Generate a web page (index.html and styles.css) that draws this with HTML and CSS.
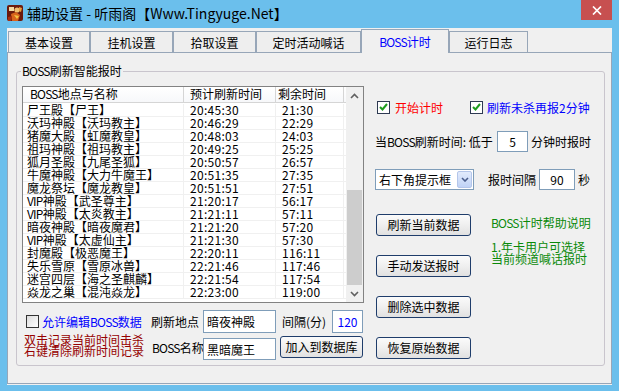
FILE: index.html
```html
<!DOCTYPE html>
<html lang="zh-CN">
<head>
  <meta charset="UTF-8">
  <title>辅助设置 - 听雨阁【Www.Tingyuge.Net】</title>
  <link rel="stylesheet" href="styles.css">
</head>
<body>
  <div class="window">
    <div class="titlebar">
      <svg class="app-icon" viewBox="0 0 16 16">
        <rect width="16" height="16" rx="2" fill="#6b1a0c"/>
        <path d="M2 2h5v4H2z" fill="#f2d9a0"/>
        <circle cx="10" cy="5" r="2.6" fill="#f0c070"/>
        <path d="M4 9L9 7l4 3-2 6H5z" fill="#d8641c"/>
        <path d="M7 10l5 1-2 3z" fill="#f5c542"/>
        <path d="M1 12l4-1-1 5H1z" fill="#a8300f"/>
        <path d="M12 2l3 1-1 4-2-1z" fill="#e8a040"/>
      </svg>
      <span class="title">辅助设置 - 听雨阁【Www.Tingyuge.Net】</span>
      <span class="close">
        <svg width="10" height="9" viewBox="0 0 10 9"><path d="M1 0.5L9 8.5M9 0.5L1 8.5" stroke="#fff" stroke-width="1.7"/></svg>
      </span>
    </div>

    <div class="client">
      <div class="tabs">
        <div class="tab t1">基本设置</div>
        <div class="tab t2">挂机设置</div>
        <div class="tab t3">拾取设置</div>
        <div class="tab t4">定时活动喊话</div>
        <div class="tab t5 active"><span class="en">BOSS</span>计时</div>
        <div class="tab t6">运行日志</div>
      </div>

      <div class="panel">
        <fieldset class="group">
          <legend><span class="en">BOSS</span>刷新智能报时</legend>
          <div class="group-body">

            <div class="left">
              <div class="list">
                <div class="grid">
                  <div class="head">
                    <span class="c1"><span class="en">BOSS</span>地点与名称</span>
                    <span class="c2">预计刷新时间</span>
                    <span class="c3">剩余时间</span>
                  </div>
                  <div class="rows">
                    <div class="row"><span class="c1">尸王殿【尸王】</span><span class="c2">20:45:30</span><span class="c3">21:30</span></div>
                    <div class="row"><span class="c1">沃玛神殿【沃玛教主】</span><span class="c2">20:46:29</span><span class="c3">22:29</span></div>
                    <div class="row"><span class="c1">猪魔大殿【虹魔教皇】</span><span class="c2">20:48:03</span><span class="c3">24:03</span></div>
                    <div class="row"><span class="c1">祖玛神殿【祖玛教主】</span><span class="c2">20:49:25</span><span class="c3">25:25</span></div>
                    <div class="row"><span class="c1">狐月圣殿【九尾圣狐】</span><span class="c2">20:50:57</span><span class="c3">26:57</span></div>
                    <div class="row"><span class="c1">牛魔神殿【大力牛魔王】</span><span class="c2">20:51:35</span><span class="c3">27:35</span></div>
                    <div class="row"><span class="c1">魔龙祭坛【魔龙教皇】</span><span class="c2">20:51:51</span><span class="c3">27:51</span></div>
                    <div class="row"><span class="c1"><span class="en">VIP</span>神殿【武圣尊主】</span><span class="c2">21:20:17</span><span class="c3">56:17</span></div>
                    <div class="row"><span class="c1"><span class="en">VIP</span>神殿【太炎教主】</span><span class="c2">21:21:11</span><span class="c3">57:11</span></div>
                    <div class="row"><span class="c1">暗夜神殿【暗夜魔君】</span><span class="c2">21:21:20</span><span class="c3">57:20</span></div>
                    <div class="row"><span class="c1"><span class="en">VIP</span>神殿【太虚仙主】</span><span class="c2">21:21:30</span><span class="c3">57:30</span></div>
                    <div class="row"><span class="c1">封魔殿【极恶魔王】</span><span class="c2">22:20:11</span><span class="c3">116:11</span></div>
                    <div class="row"><span class="c1">失乐雪原【雪原冰兽】</span><span class="c2">22:21:46</span><span class="c3">117:46</span></div>
                    <div class="row"><span class="c1">迷宫四层【海之圣麒麟】</span><span class="c2">22:21:54</span><span class="c3">117:54</span></div>
                    <div class="row"><span class="c1">焱龙之巢【混沌焱龙】</span><span class="c2">22:23:00</span><span class="c3">119:00</span></div>
                  </div>
                </div>
                <div class="scrollbar">
                  <div class="sb-btn">
                    <svg width="9" height="6" viewBox="0 0 9 6"><path d="M1 5L4.5 1.5 8 5" fill="none" stroke="#606060" stroke-width="1.6"/></svg>
                  </div>
                  <div class="sb-track"><div class="sb-thumb"></div></div>
                  <div class="sb-btn">
                    <svg width="9" height="6" viewBox="0 0 9 6"><path d="M1 1L4.5 4.5 8 1" fill="none" stroke="#606060" stroke-width="1.6"/></svg>
                  </div>
                </div>
              </div>

              <div class="edit-row">
                <div class="cell-a">
                  <span class="box plain"></span>
                  <span class="blue allow">允许编辑<span class="en">BOSS</span>数据</span>
                </div>
                <span class="lbl">刷新地点</span>
                <input class="field place" type="text" value="暗夜神殿">
                <span class="lbl gap">间隔(分)</span>
                <input class="field mins" type="text" value="120">
              </div>

              <div class="edit-row second">
                <div class="cell-a notes">
                  <div>双击记录当前时间击杀</div>
                  <div>右键清除刷新时间记录</div>
                </div>
                <span class="lbl name-lbl"><span class="en">BOSS</span>名称</span>
                <input class="field place name" type="text" value="黑暗魔王">
                <button class="btn add">加入到数据库</button>
              </div>
            </div>

            <div class="right">
              <div class="opt-row checks">
                <span class="box on">
                  <svg width="9" height="8" viewBox="0 0 9 8"><path d="M1 4l2.5 2.5L8 1" fill="none" stroke="#1f9c1f" stroke-width="2"/></svg>
                </span>
                <span class="red start">开始计时</span>
                <span class="box on">
                  <svg width="9" height="8" viewBox="0 0 9 8"><path d="M1 4l2.5 2.5L8 1" fill="none" stroke="#1f9c1f" stroke-width="2"/></svg>
                </span>
                <span class="blue again">刷新未杀再报2分钟</span>
              </div>

              <div class="opt-row below">
                <span class="txt lead">当<span class="en">BOSS</span>刷新时间: 低于</span>
                <input class="field small" type="text" value="5">
                <span class="txt after">分钟时报时</span>
              </div>

              <div class="opt-row mode">
                <div class="combo">
                  <span>右下角提示框</span>
                  <span class="combo-btn">
                    <svg width="8" height="5" viewBox="0 0 8 5"><path d="M1 1l3 3 3-3" fill="none" stroke="#4a5d8c" stroke-width="1.6"/></svg>
                  </span>
                </div>
                <span class="txt every">报时间隔</span>
                <input class="field secs" type="text" value="90">
                <span class="txt after">秒</span>
              </div>

              <div class="actions">
                <div class="btns">
                  <button class="btn">刷新当前数据</button>
                  <button class="btn">手动发送报时</button>
                  <button class="btn">删除选中数据</button>
                  <button class="btn">恢复原始数据</button>
                </div>
                <div class="help">
                  <div class="help-title"><span class="en">BOSS</span>计时帮助说明</div>
                  <div>1.年卡用户可选择</div>
                  <div>当前频道喊话报时</div>
                </div>
              </div>
            </div>

          </div>
        </fieldset>
      </div>
    </div>
  </div>
</body>
</html>
```

FILE: styles.css
```css
:root {
  --frame: #6bbfec;
  --face: #f0f0f0;
  --tab-line: #97a6b8;
  --field-line: #7f9db9;
  --btn-line: #1f3d6b;
}

* {
  box-sizing: border-box;
  margin: 0;
  padding: 0;
}

body {
  font-family: "Noto Sans CJK SC", "Noto Sans", sans-serif;
  font-size: 12px;
  color: #000;
  background: var(--frame);
}

/* latin runs are narrow in the original bitmap font */
.en {
  letter-spacing: -0.8px;
}

.window {
  width: 619px;
  height: 391px;
  background: var(--frame);
  display: flex;
  flex-direction: column;
}

/* title bar */
.titlebar {
  height: 28px;
  display: flex;
  align-items: flex-start;
}

.app-icon {
  width: 16px;
  height: 16px;
  margin: 5px 0 0 7px;
}

.title {
  margin: 4px 0 0 4px;
  font-size: 14px;
  line-height: 19px;
  white-space: nowrap;
}

.close {
  width: 31px;
  height: 20px;
  margin-left: auto;
  margin-right: 7px;
  background: #c75050;
  display: flex;
  align-items: center;
  justify-content: center;
}

/* client */
.client {
  flex: 1;
  margin: 0 7px 6px;
  background: var(--face);
  display: flex;
  flex-direction: column;
}

.tabs {
  height: 24px;
  display: flex;
  align-items: flex-end;
  padding-left: 1px;
}

.tab {
  height: 21px;
  padding-top: 2px;
  border: 1px solid var(--tab-line);
  border-bottom: none;
  background: #eeeeee;
  display: flex;
  align-items: center;
  justify-content: center;
  line-height: 14px;
  white-space: nowrap;
}

.t1 { width: 82px; }
.t2 { width: 83px; }
.t3 { width: 83px; }
.t4 { width: 105px; }
.t5 { width: 88px; }
.t6 { width: 79px; }

.tab.active {
  height: 24px;
  margin-bottom: -1px;
  padding-top: 0;
  background: var(--face);
  color: #0000ff;
  position: relative;
}

.panel {
  flex: 1;
  margin-bottom: 1px;
  border: 1px solid var(--tab-line);
  padding: 10px 6px 0 8px;
}

/* group box */
.group {
  border: 1px solid #c9c5cd;
  border-radius: 3px;
  padding: 0 6px 5px 5px;
  min-width: 0;
}

.group legend {
  margin-left: -1px;
  padding: 0 1px;
  line-height: 16px;
}

.group-body {
  display: flex;
  gap: 11px;
}

.left {
  width: 342px;
}

/* list view */
.list {
  margin-top: 7px;
  height: 217px;
  border: 1px solid #828282;
  background: #fff;
  display: flex;
}

.grid {
  flex: 1;
}

.head {
  height: 16px;
  display: flex;
  border-bottom: 1px solid #d5d5d5;
  background: linear-gradient(#ffffff, #f7f8fa);
  line-height: 14px;
}

.head > span {
  border-right: 1px solid #d5d5d5;
  white-space: nowrap;
}

.head .c1 { padding-left: 7px; }
.head .c2 { padding-left: 6px; }
.head .c3 { padding-left: 2px; }

.c1 { width: 161px; }
.c2 { width: 92px; }
.c3 { width: 68px; }

.rows {
  margin-top: 1px;
}

.row {
  height: 13px;
  display: flex;
  border-bottom: 1px solid #f0f0f0;
  line-height: 12px;
}

.row > span {
  border-right: 1px solid #f0f0f0;
  white-space: nowrap;
}

.row .c1 { padding-left: 4px; }
.row .c2,
.row .c3 {
  padding-left: 6px;
  letter-spacing: 0.3px;
}

.scrollbar {
  width: 17px;
  background: #f0f0f0;
  display: flex;
  flex-direction: column;
}

.sb-btn {
  height: 17px;
  display: flex;
  align-items: center;
  justify-content: center;
}

.sb-track {
  flex: 1;
  display: flex;
  flex-direction: column;
  justify-content: flex-end;
  padding: 0 1px;
}

.sb-thumb {
  height: 95px;
  background: #cdcdcd;
}

/* edit rows under the list */
.edit-row {
  display: flex;
  align-items: flex-start;
  margin-top: 7px;
}

.edit-row.second {
  margin-top: 1px;
}

.cell-a {
  width: 129px;
  height: 23px;
  display: flex;
  align-items: center;
  padding-left: 4px;
}

.allow {
  margin-left: 3px;
  white-space: nowrap;
}

.notes {
  display: block;
  height: auto;
  padding-left: 2px;
  color: #960000;
  line-height: 11px;
  white-space: nowrap;
}

.lbl {
  width: 52px;
  line-height: 23px;
  white-space: nowrap;
}

.lbl.gap {
  width: 50px;
  margin-left: 6px;
}

.name-lbl {
  padding-left: 1px;
  line-height: 16px;
  margin-top: 6px;
}

.field {
  height: 23px;
  border: 1px solid var(--field-line);
  background: #fff;
  padding: 0 3px;
  font: inherit;
  color: #000;
  outline: none;
}

.place { width: 73px; }

.place.name {
  height: 22px;
  margin-top: 4px;
}

.mins {
  width: 31px;
  text-align: center;
  color: #0000ff;
  padding: 0;
}

.btn {
  width: 95px;
  height: 22px;
  border: 1px solid var(--btn-line);
  border-radius: 3px;
  background: linear-gradient(#fbfbfb, #efefef 50%, #e1e1e1);
  font: inherit;
  color: #000;
  line-height: 18px;
}

.btn.add {
  width: 83px;
  margin-left: 4px;
  margin-top: 2px;
}

/* right column */
.right {
  flex: 1;
  display: flex;
  flex-direction: column;
}

.opt-row {
  display: flex;
  align-items: center;
}

.checks {
  margin-top: 20px;
  height: 16px;
  padding-left: 2px;
}

.box {
  width: 13px;
  height: 13px;
  flex: none;
  border: 1px solid #2e3a52;
  background: #fff;
  display: flex;
  align-items: center;
  justify-content: center;
}

.box.plain {
  border-color: #333;
  background: linear-gradient(135deg, #dcdcdc, #ffffff);
}

.red { color: #ff0000; }
.blue { color: #0000ff; }

.start {
  width: 80px;
  padding-left: 5px;
  white-space: nowrap;
}

.again {
  padding-left: 4px;
  white-space: nowrap;
}

.txt {
  white-space: nowrap;
}

.below {
  margin-top: 16px;
}

.lead {
  width: 122px;
}

.small {
  width: 31px;
  height: 21px;
  text-align: center;
  padding: 0;
}

.after {
  margin-left: 3px;
}

.mode {
  margin-top: 17px;
}

.combo {
  width: 99px;
  height: 21px;
  border: 1px solid var(--field-line);
  background: #fff;
  display: flex;
  align-items: center;
  justify-content: space-between;
  padding: 0 1px 0 3px;
}

.combo-btn {
  width: 15px;
  height: 17px;
  border: 1px solid #b4c6ea;
  border-radius: 2px;
  background: linear-gradient(#e2ebfc, #c0d3f6);
  display: flex;
  align-items: center;
  justify-content: center;
}

.every {
  margin-left: 14px;
}

.secs {
  width: 36px;
  height: 21px;
  margin-left: 3px;
  text-align: center;
  padding: 0;
}

.actions {
  display: flex;
  margin-top: 24px;
}

.btns {
  display: flex;
  flex-direction: column;
  gap: 19px;
  margin-left: 1px;
}

.help {
  margin-left: 20px;
  margin-top: 2px;
  color: #0a8a0a;
  line-height: 12px;
  white-space: nowrap;
}

.help-title {
  line-height: 14px;
  margin-bottom: 11px;
}
```
